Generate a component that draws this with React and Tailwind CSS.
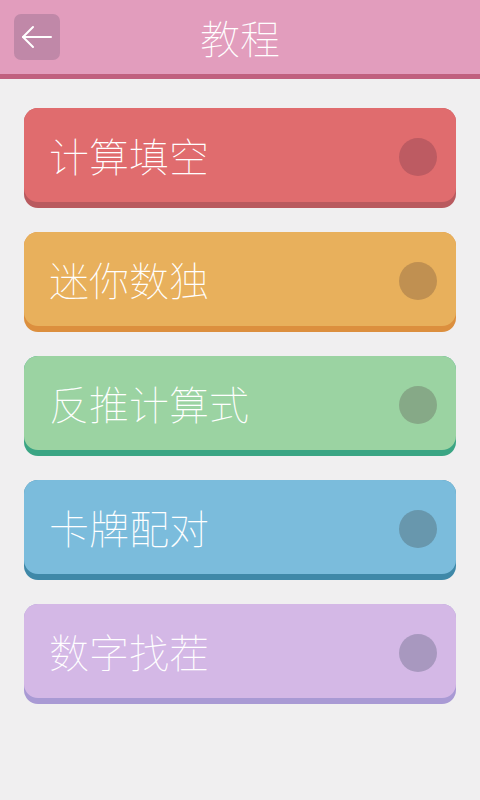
const items = [
  { label: "计算填空", card: "bg-[#e06c6e]", edge: "bg-[#b95a5f]", dot: "bg-[#bd5b62]" },
  { label: "迷你数独", card: "bg-[#e8b05c]", edge: "bg-[#dc8f3e]", dot: "bg-[#c09051]" },
  { label: "反推计算式", card: "bg-[#9bd3a2]", edge: "bg-[#3ba584]", dot: "bg-[#86a987]" },
  { label: "卡牌配对", card: "bg-[#7bbcdc]", edge: "bg-[#3f88a8]", dot: "bg-[#6897ad]" },
  { label: "数字找茬", card: "bg-[#d4b8e6]", edge: "bg-[#a99ad4]", dot: "bg-[#a898bf]" },
];

const Header = () => (
  <div className="flex h-[79px] flex-col">
    <div className="relative flex h-[74px] items-center justify-center bg-[#e29dbd]">
      <button className="absolute left-[14px] top-[14px] flex h-[46px] w-[46px] items-center justify-center rounded-[7px] bg-[#c088a8]">
        <svg width="32" height="26" viewBox="0 0 32 26" fill="none" stroke="white" strokeWidth="2" strokeLinecap="round" strokeLinejoin="round">
          <path d="M2 13 H30" />
          <path d="M12 3 L2 13 L12 23" />
        </svg>
      </button>
      <span className="text-[40px] font-thin leading-none text-white">教程</span>
    </div>
    <div className="h-[5px] bg-[#c0607f]" />
  </div>
);

const MenuCard = ({ label, card, edge, dot }) => (
  <div className={`flex h-[100px] flex-col rounded-[14px] ${edge}`}>
    <div className={`flex h-[94px] items-center justify-between rounded-[14px] pl-[25px] pr-[19px] ${card}`}>
      <span className="text-[40px] font-thin leading-none text-white">{label}</span>
      <span className={`mt-[4px] h-[38px] w-[38px] rounded-full ${dot}`} />
    </div>
  </div>
);

export default function App() {
  return (
    <div className="min-h-[800px] bg-[#f0eff0] font-['Noto_Sans_CJK_SC','Noto_Sans',sans-serif]">
      <Header />
      <div className="flex flex-col gap-[24px] px-[24px] pt-[29px]">
        {items.map((item) => (
          <MenuCard key={item.label} {...item} />
        ))}
      </div>
    </div>
  );
}
